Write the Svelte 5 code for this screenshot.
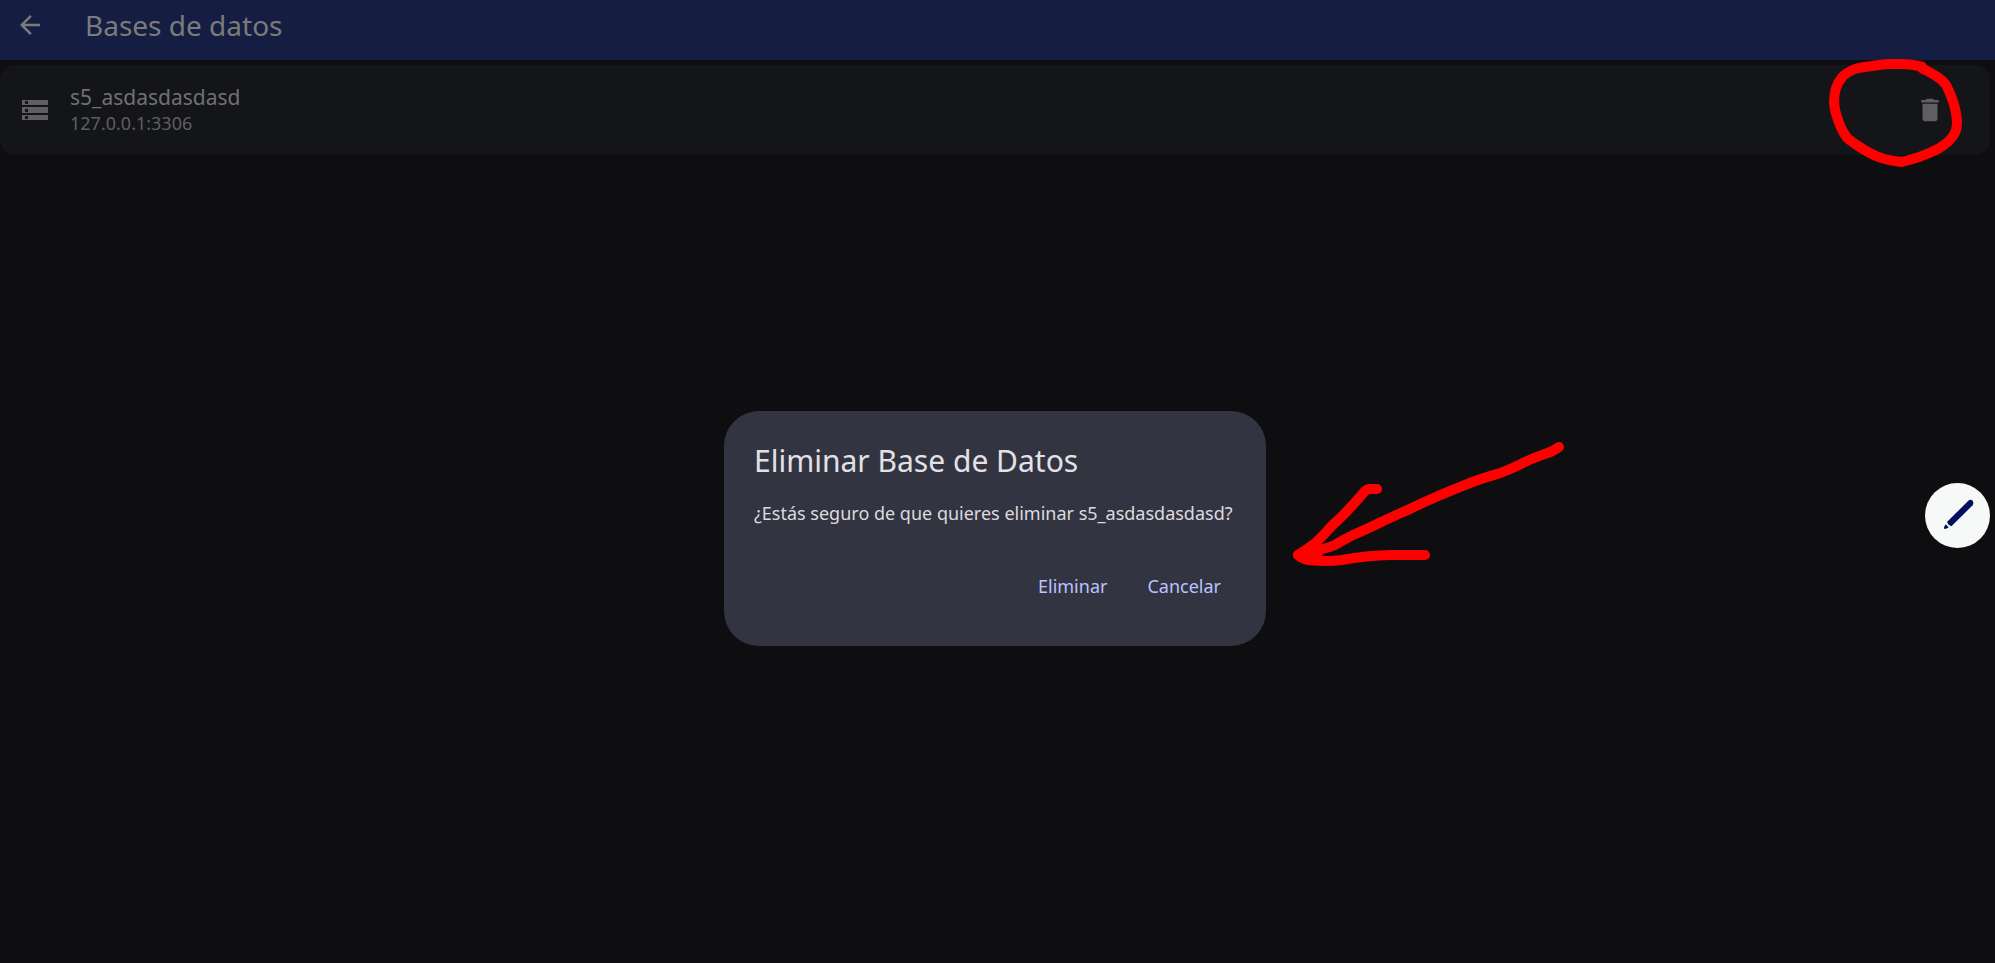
<script>
  let databases = $state([{ name: 's5_asdasdasdasd', host: '127.0.0.1:3306' }]);
  let pending = $state('s5_asdasdasdasd');

  function remove() {
    databases = databases.filter((db) => db.name !== pending);
    pending = '';
  }
</script>

<div class="screen">
  <header>
    <button class="icon" aria-label="Volver">
      <svg width="30" height="30" viewBox="0 0 24 24"><path d="M20 11H7.83l5.59-5.59L12 4l-8 8 8 8 1.41-1.41L7.83 13H20v-2z" /></svg>
    </button>
    <h1>Bases de datos</h1>
  </header>

  <ul>
    {#each databases as db}
      <li>
        <svg class="storage" width="30" height="30" viewBox="0 0 30 30">
          <path fill-rule="evenodd" d="M2 5h26v5H2zM5 6v3h3V6zM2 12h26v6H2zM5 14v3h3v-3zM2 20h26v5H2zM5 21v3h3v-3z" />
        </svg>
        <div class="label">
          <span class="name">{db.name}</span>
          <span class="host">{db.host}</span>
        </div>
        <button class="icon" aria-label="Eliminar {db.name}" onclick={() => (pending = db.name)}>
          <svg width="30" height="30" viewBox="0 0 24 24"><path d="M6 19c0 1.1.9 2 2 2h8c1.1 0 2-.9 2-2V7H6v12zM19 4h-3.5l-1-1h-5l-1 1H5v2h14V4z" /></svg>
        </button>
      </li>
    {/each}
  </ul>

  <svg class="circle" viewBox="0 0 600 420" aria-hidden="true">
    <path d="M381 80Q350 73 325 72H280Q250 74 225 79Q190 83 173 90Q150 100 140 113C122 134 117 160 117 187Q119 215 129 240C137 262 144 281 159 296Q183 314 205 328C240 348 262 360 320 366Q350 358 375 350Q410 337 430 326Q466 304 476 285Q486 270 486 245Q483 210 475 187C466 160 460 147 451 132Q435 111 381 85" />
  </svg>

  {#if pending}
    <div class="overlay">
      <div class="holder">
        <div class="dialog" role="dialog" aria-modal="true" aria-labelledby="dialog-title">
          <h2 id="dialog-title">Eliminar Base de Datos</h2>
          <p>¿Estás seguro de que quieres eliminar {pending}?</p>
          <div class="actions">
            <button onclick={remove}>Eliminar</button>
            <button onclick={() => (pending = '')}>Cancelar</button>
          </div>
        </div>
        <svg class="arrow" viewBox="0 0 900 450" aria-hidden="true">
          <path d="M837 51Q820 64 795 72Q750 87 715 106Q680 123 655 131Q590 150 550 167Q460 203 400 232L310 273Q260 298 215 317Q190 329 165 345Q145 354 125 357L54 375" />
          <path d="M291 177H268Q258 178 252 187Q222 222 195 250Q175 270 155 288Q130 317 108 337Q85 355 54 375Q68 389 90 391Q150 395 185 390Q260 376 330 375H435" />
          <path d="M70 374L110 362L118 364L90 382Z" />
        </svg>
      </div>
    </div>
  {/if}

  <button class="fab" aria-label="Editar">
    <svg width="65" height="65" viewBox="0 0 195 195">
      <path d="M66 117L130 53Q137 47 143 53Q148 60 143 67L80 129Q75 130 70 124Z" />
      <path d="M62 124L71 133Q66 138 59 138Q56 137 57 133Z" />
    </svg>
  </button>
</div>

<style>
  :global(body) {
    margin: 0;
    background: #0e0e10;
  }
  .screen {
    min-height: 100vh;
    position: relative;
    box-sizing: border-box;
    background: #0e0e10;
    font-family: 'Noto Sans', sans-serif;
    color: #717173;
  }
  h1,
  h2,
  p,
  ul {
    margin: 0;
    padding: 0;
    font-weight: 400;
  }
  button {
    border: 0;
    padding: 0;
    background: none;
    font: inherit;
    color: inherit;
    cursor: pointer;
  }
  svg {
    display: block;
  }
  header {
    display: flex;
    align-items: center;
    gap: 40px;
    height: 50px;
    padding: 0 15px 10px;
    background: #161d42;
    color: #7b7b7b;
  }
  .icon svg,
  .storage {
    fill: currentColor;
  }
  h1 {
    font-size: 28px;
    line-height: 36px;
  }
  ul {
    list-style: none;
    padding: 5px 5px 0 0;
  }
  li {
    display: flex;
    align-items: center;
    gap: 20px;
    height: 90px;
    padding: 0 45px 0 20px;
    box-sizing: border-box;
    border-radius: 15px;
    background: #141518;
    color: #5f5f62;
  }
  .label {
    flex: 1;
    display: flex;
    flex-direction: column;
    line-height: 26px;
  }
  .name {
    font-size: 21px;
    color: #717174;
  }
  .host {
    font-size: 18px;
  }
  .circle {
    position: absolute;
    top: 40px;
    right: 0;
    width: 200px;
  }
  .circle,
  .arrow {
    fill: none;
    stroke: #ff0000;
    stroke-width: 30px;
    stroke-linecap: round;
    stroke-linejoin: round;
    pointer-events: none;
  }
  .overlay {
    position: fixed;
    inset: 0;
    padding: 94px 5px 0 0;
    display: flex;
    align-items: center;
    justify-content: center;
  }
  .holder {
    position: relative;
  }
  .dialog {
    box-sizing: border-box;
    min-width: 542px;
    padding: 30px;
    border-radius: 35px;
    background: #333441;
    color: #e4e1e6;
  }
  h2 {
    font-size: 30px;
    line-height: 40px;
  }
  p {
    padding: 20px 0 35px;
    font-size: 18px;
    line-height: 25px;
    color: #dddade;
  }
  .actions {
    display: flex;
    justify-content: flex-end;
    gap: 10px;
    padding-bottom: 5px;
  }
  .actions button {
    padding: 0 15px;
    height: 50px;
    font-size: 18px;
    color: #b9c3ff;
  }
  .arrow {
    position: absolute;
    left: 100%;
    top: 19px;
    width: 300px;
    margin-left: 14px;
  }
  .fab {
    position: absolute;
    right: 5px;
    top: 483px;
    border-radius: 50%;
    background: #f7f9f9;
    fill: #00105c;
  }
</style>
